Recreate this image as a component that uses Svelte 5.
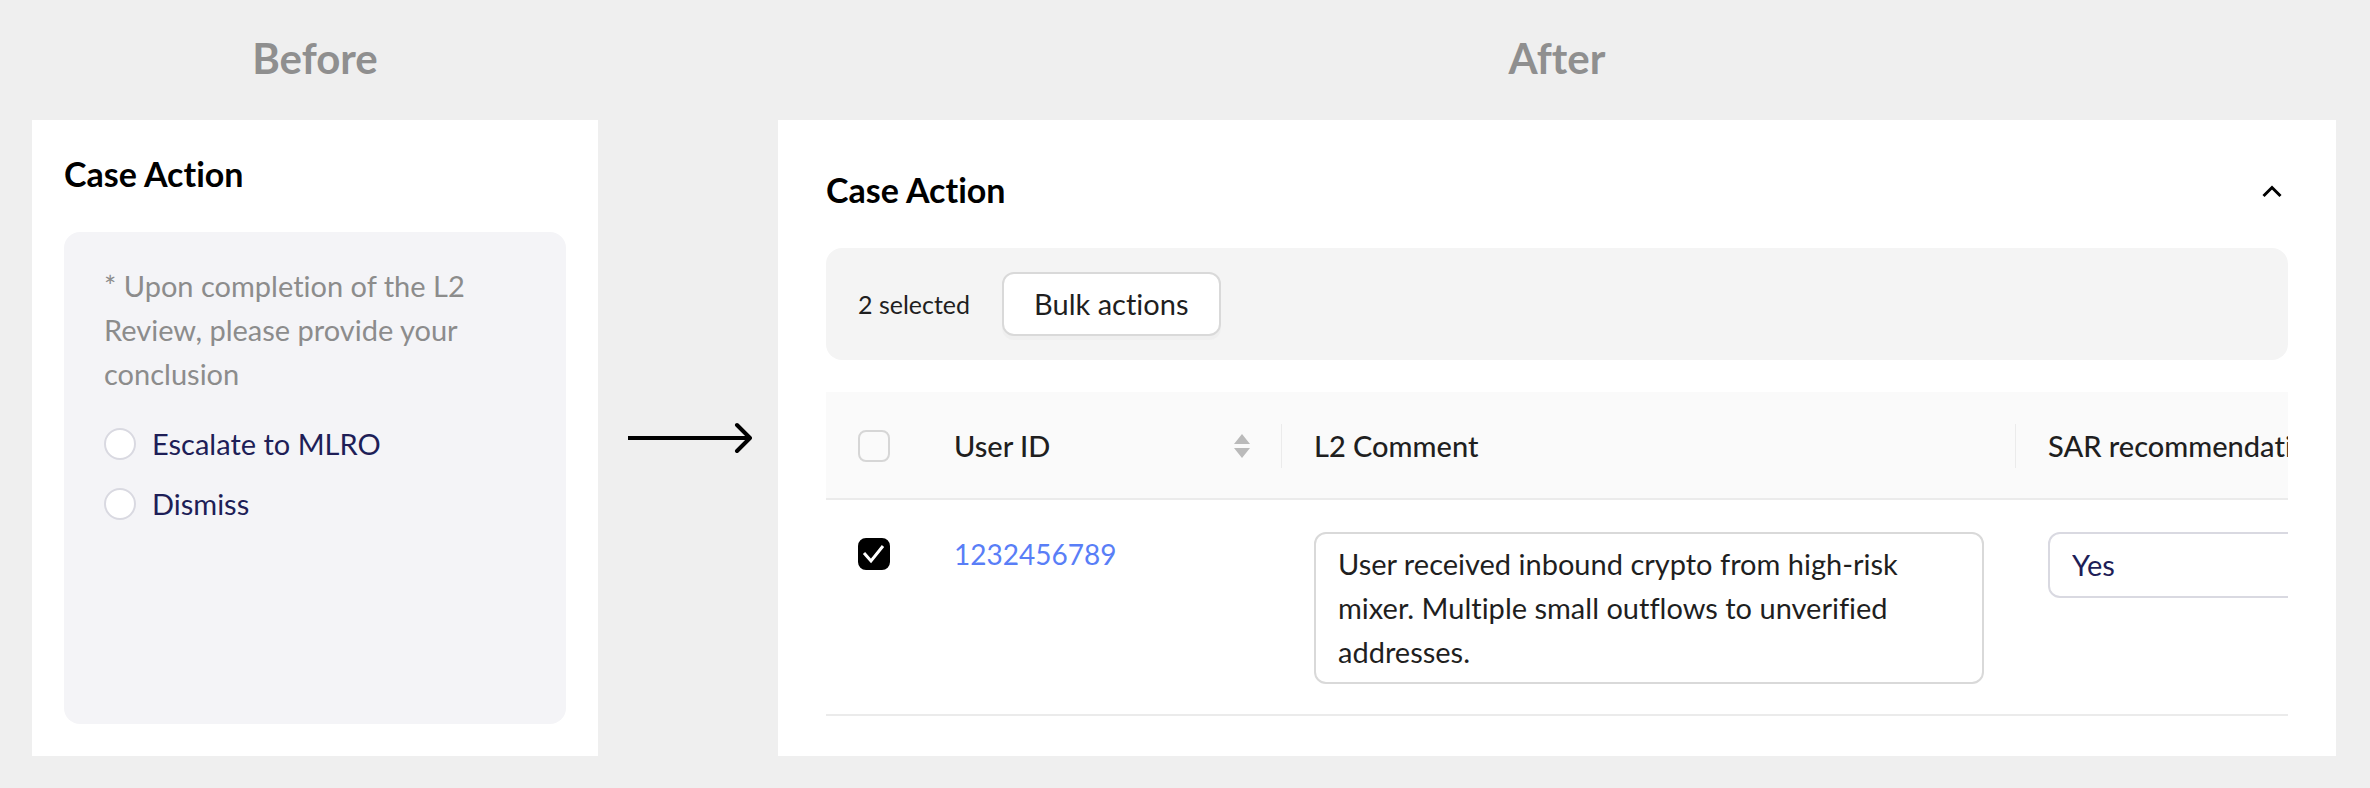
<script lang="ts">
	interface CaseRow {
		id: string;
		checked: boolean;
		comment: string;
		recommendation: string;
	}

	const conclusions = ['Escalate to MLRO', 'Dismiss'];

	let conclusion = $state('');
	let open = $state(true);
	let allChecked = $state(false);
	let rows: CaseRow[] = $state([
		{
			id: '1232456789',
			checked: true,
			comment:
				'User received inbound crypto from high-risk mixer. Multiple small outflows to unverified addresses.',
			recommendation: 'Yes'
		}
	]);
</script>

<main class="compare">
	<section class="side">
		<h2 class="side-title">Before</h2>
		<div class="card card-before">
			<h3>Case Action</h3>
			<fieldset class="panel" aria-labelledby="conclusion-hint">
				<p class="hint" id="conclusion-hint">
					* Upon completion of the L2 Review, please provide your conclusion
				</p>
				{#each conclusions as item}
					<label class="option">
						<input type="radio" name="conclusion" value={item} bind:group={conclusion} />
						{item}
					</label>
				{/each}
			</fieldset>
		</div>
	</section>

	<div class="arrow">
		<svg width="128" height="36" viewBox="0 0 128 36" fill="none" aria-hidden="true">
			<g stroke="#000" stroke-width="4">
				<path d="M4 18H125" />
				<path d="M113 5L126 18L113 31" stroke-linecap="round" stroke-linejoin="round" />
			</g>
		</svg>
	</div>

	<section class="side">
		<h2 class="side-title">After</h2>
		<div class="card card-after">
			<header class="card-header">
				<h3>Case Action</h3>
				<button class="toggle" aria-label="Toggle section" onclick={() => (open = !open)}>
					<svg width="32" height="32" viewBox="0 0 32 32" fill="none" aria-hidden="true">
						<path d="M7.5 20L16 11.5L24.5 20" stroke="#000" stroke-width="3" />
					</svg>
				</button>
			</header>

			{#if open}
				<div class="bulk-bar">
					<span class="selected">2 selected</span>
					<button class="bulk-button">Bulk actions</button>
				</div>

				<div class="table-wrap">
					<table>
						<colgroup>
							<col class="col-check" />
							<col class="col-user" />
							<col class="col-comment" />
							<col class="col-sar" />
						</colgroup>
						<thead>
							<tr>
								<th>
									<input type="checkbox" aria-label="Select all" bind:checked={allChecked} />
								</th>
								<th>
									<div class="th-inner divided">
										User ID
										<svg width="16" height="24" viewBox="0 0 16 24" aria-hidden="true">
											<path d="M8 0L16 10H0Z M0 14H16L8 24Z" fill="#bababa" />
										</svg>
									</div>
								</th>
								<th><div class="th-inner divided">L2 Comment</div></th>
								<th><div class="th-inner">SAR recommendation</div></th>
							</tr>
						</thead>
						<tbody>
							{#each rows as row}
								<tr>
									<td>
										<div class="line">
											<input type="checkbox" aria-label="Select {row.id}" bind:checked={row.checked} />
										</div>
									</td>
									<td><a class="line" href="#{row.id}">{row.id}</a></td>
									<td>
										<textarea rows="3" aria-label="L2 Comment" bind:value={row.comment}></textarea>
									</td>
									<td>
										<select aria-label="SAR recommendation" bind:value={row.recommendation}>
											<option>Yes</option>
											<option>No</option>
										</select>
									</td>
								</tr>
							{/each}
						</tbody>
					</table>
				</div>
			{/if}
		</div>
	</section>
</main>

<style>
	:global(body) {
		background: #efefef;
	}

	.compare {
		display: grid;
		grid-template-columns: minmax(0, 566fr) 180px minmax(0, 1558fr);
		padding: 0 34px 32px 32px;
		font-family: Lato, sans-serif;
		font-size: 29px;
		font-variant-ligatures: none;
		line-height: 44px;
		color: #1f1f1f;
	}

	.compare * {
		box-sizing: border-box;
	}

	.side {
		display: flex;
		flex-direction: column;
	}

	.side-title {
		margin: 0;
		padding-bottom: 4px;
		font-size: 42px;
		font-weight: 700;
		line-height: 116px;
		text-align: center;
		color: #8f8f8f;
	}

	.card {
		flex: 1;
		display: flex;
		flex-direction: column;
		gap: 32px;
		background: #fff;
	}

	.card-before {
		padding: 32px;
	}

	.card-after {
		padding: 48px 48px 40px;
	}

	h3 {
		margin: 0;
		padding-bottom: 4px;
		font-size: 34px;
		font-weight: 700;
		line-height: 44px;
		color: #000;
	}

	.panel {
		flex: 1;
		display: flex;
		flex-direction: column;
		gap: 16px;
		margin: 0;
		padding: 32px 40px;
		border: 0;
		border-radius: 16px;
		background: #f4f4f7;
	}

	.hint {
		margin: 0 0 10px;
		color: #8c8c8c;
	}

	.option {
		display: flex;
		align-items: center;
		gap: 16px;
		color: #1e1e57;
	}

	input {
		appearance: none;
		flex: none;
		width: 32px;
		height: 32px;
		margin: 0;
		border: 2px solid #d6d6d6;
	}

	input[type='radio'] {
		border-color: #d9d9e1;
		border-radius: 50%;
		background: #fff;
	}

	input[type='radio']:checked {
		border: 10px solid #000;
	}

	input[type='checkbox'] {
		display: block;
		border-radius: 8px;
	}

	input[type='checkbox']:checked {
		border-color: #000;
		background: #000
			url("data:image/svg+xml,%3Csvg xmlns='http://www.w3.org/2000/svg' viewBox='0 0 28 28'%3E%3Cpath d='M4 13L11 21L23 6' fill='none' stroke='white' stroke-width='3'/%3E%3C/svg%3E")
			center / 28px 28px no-repeat;
	}

	.arrow {
		display: flex;
		align-items: center;
		justify-content: center;
		padding-top: 120px;
	}

	.card-header {
		display: flex;
		align-items: center;
		justify-content: space-between;
	}

	.toggle {
		display: flex;
		padding: 0;
		border: 0;
		background: none;
	}

	.bulk-bar {
		display: flex;
		align-items: center;
		gap: 32px;
		padding: 24px 32px;
		border-radius: 16px;
		background: #f4f4f4;
	}

	.selected {
		font-size: 25px;
	}

	.bulk-button {
		padding: 8px 30px;
		border: 2px solid #d9d9d9;
		border-radius: 12px;
		background: #fff;
		box-shadow: 0 4px 0 #efefef;
		color: inherit;
		font: inherit;
		font-variant-ligatures: none;
	}

	.table-wrap {
		overflow-x: auto;
		scrollbar-width: none;
	}

	table {
		width: 1590px;
		table-layout: fixed;
		border-collapse: separate;
		border-spacing: 0;
	}

	.col-check {
		width: 96px;
	}

	.col-user {
		width: 360px;
	}

	.col-comment {
		width: 734px;
	}

	.col-sar {
		width: 400px;
	}

	th {
		padding: 32px 0 30px 32px;
		border-bottom: 2px solid #ebebeb;
		background: #fafafa;
		font-weight: 500;
		text-align: left;
	}

	.th-inner {
		display: flex;
		align-items: center;
		justify-content: space-between;
		padding-right: 31px;
		white-space: nowrap;
	}

	.divided {
		border-right: 1px solid #ebebeb;
	}

	td {
		padding: 32px 32px 30px;
		border-bottom: 2px solid #ebebeb;
		vertical-align: top;
	}

	td:first-child {
		padding-right: 0;
	}

	.line {
		display: flex;
		align-items: center;
		height: 44px;
	}

	a {
		color: #597ef7;
		font-size: 28px;
		text-decoration: none;
	}

	textarea,
	select {
		display: block;
		width: 100%;
		border: 2px solid #d9d9d9;
		border-radius: 12px;
		background: #fff;
		color: inherit;
		font: inherit;
		font-variant-ligatures: none;
	}

	textarea {
		padding: 8px 22px;
		resize: none;
		overflow: hidden;
	}

	select {
		appearance: none;
		height: 66px;
		padding: 8px 22px;
		border-color: #d9d9e1;
		color: #1e1e57;
	}
</style>
